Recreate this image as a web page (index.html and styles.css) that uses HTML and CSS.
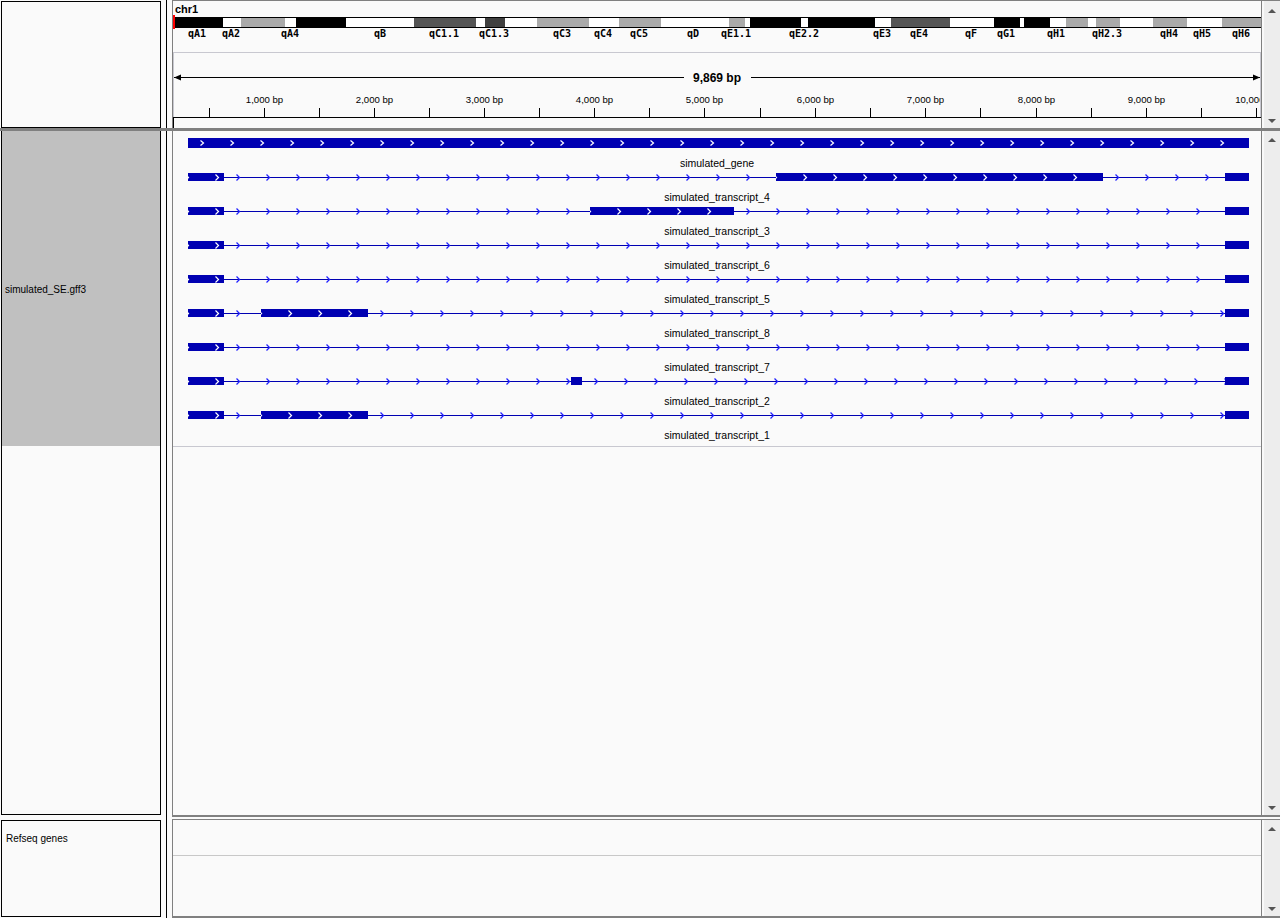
FILE: index.html
```html
<!DOCTYPE html>
<html>
<head>
<meta charset="utf-8">
<title>IGV</title>
<link rel="stylesheet" href="styles.css">
</head>
<body>
<div class="app">

  <section class="panel panel-header">
    <div class="name-col"><div class="name-box"></div></div>
    <div class="attr-col"></div>
    <div class="pane pane-header">
      <div class="pane-content">
        <div class="chrom-name">chr1</div>
        <div class="ideo">
          <div class="ideo-marker"></div>
          <div class="ideo-bands">
            <span class="band b-black" style="width:48px"></span>
            <span class="band b-white" style="width:18px"></span>
            <span class="band b-gray" style="width:44px"></span>
            <span class="band b-white" style="width:11px"></span>
            <span class="band b-black" style="width:50px"></span>
            <span class="band b-white" style="width:68px"></span>
            <span class="band b-dark" style="width:62px"></span>
            <span class="band b-white" style="width:9px"></span>
            <span class="band b-darker" style="width:20px"></span>
            <span class="band b-white" style="width:32px"></span>
            <span class="band b-gray" style="width:52px"></span>
            <span class="band b-white" style="width:30px"></span>
            <span class="band b-gray" style="width:42px"></span>
            <span class="band b-white" style="width:68px"></span>
            <span class="band b-gray" style="width:16px"></span>
            <span class="band b-white" style="width:5px"></span>
            <span class="band b-black" style="width:51px"></span>
            <span class="band b-white" style="width:7px"></span>
            <span class="band b-black" style="width:67px"></span>
            <span class="band b-white" style="width:16px"></span>
            <span class="band b-dark" style="width:59px"></span>
            <span class="band b-white" style="width:44px"></span>
            <span class="band b-black" style="width:26px"></span>
            <span class="band b-white" style="width:4px"></span>
            <span class="band b-black" style="width:26px"></span>
            <span class="band b-white" style="width:16px"></span>
            <span class="band b-gray" style="width:22px"></span>
            <span class="band b-white" style="width:8px"></span>
            <span class="band b-gray" style="width:24px"></span>
            <span class="band b-white" style="width:33px"></span>
            <span class="band b-gray" style="width:34px"></span>
            <span class="band b-white" style="width:35px"></span>
            <span class="band b-gray band-last"></span>
          </div>
          <span class="ideo-label" style="left:24px">qA1</span>
          <span class="ideo-label" style="left:58px">qA2</span>
          <span class="ideo-label" style="left:117px">qA4</span>
          <span class="ideo-label" style="left:207px">qB</span>
          <span class="ideo-label" style="left:271px">qC1.1</span>
          <span class="ideo-label" style="left:321px">qC1.3</span>
          <span class="ideo-label" style="left:389px">qC3</span>
          <span class="ideo-label" style="left:430px">qC4</span>
          <span class="ideo-label" style="left:466px">qC5</span>
          <span class="ideo-label" style="left:520px">qD</span>
          <span class="ideo-label" style="left:563px">qE1.1</span>
          <span class="ideo-label" style="left:631px">qE2.2</span>
          <span class="ideo-label" style="left:709px">qE3</span>
          <span class="ideo-label" style="left:746px">qE4</span>
          <span class="ideo-label" style="left:798px">qF</span>
          <span class="ideo-label" style="left:833px">qG1</span>
          <span class="ideo-label" style="left:883px">qH1</span>
          <span class="ideo-label" style="left:934px">qH2.3</span>
          <span class="ideo-label" style="left:996px">qH4</span>
          <span class="ideo-label" style="left:1029px">qH5</span>
          <span class="ideo-label" style="left:1068px">qH6</span>
        </div>
        <div class="ruler">
          <svg class="ruler-svg" width="1086" height="64" viewBox="0 0 1086 64">
            <rect class="rl" x="0" y="24" width="510" height="1"/>
            <rect class="rl" x="577" y="24" width="509" height="1"/>
            <polygon class="rl" points="0,24.5 7,21.5 7,27.5"/>
            <polygon class="rl" points="1086,24.5 1079,21.5 1079,27.5"/>
            <text class="span-label" x="543" y="29" text-anchor="middle">9,869 bp</text>
            <rect class="rl" x="35" y="55" width="1" height="9"/>
            <rect class="rl" x="90" y="55" width="1" height="9"/>
            <rect class="rl" x="145" y="55" width="1" height="9"/>
            <rect class="rl" x="200" y="55" width="1" height="9"/>
            <rect class="rl" x="255" y="55" width="1" height="9"/>
            <rect class="rl" x="310" y="55" width="1" height="9"/>
            <rect class="rl" x="365" y="55" width="1" height="9"/>
            <rect class="rl" x="420" y="55" width="1" height="9"/>
            <rect class="rl" x="475" y="55" width="1" height="9"/>
            <rect class="rl" x="530" y="55" width="1" height="9"/>
            <rect class="rl" x="586" y="55" width="1" height="9"/>
            <rect class="rl" x="641" y="55" width="1" height="9"/>
            <rect class="rl" x="696" y="55" width="1" height="9"/>
            <rect class="rl" x="751" y="55" width="1" height="9"/>
            <rect class="rl" x="806" y="55" width="1" height="9"/>
            <rect class="rl" x="862" y="55" width="1" height="9"/>
            <rect class="rl" x="917" y="55" width="1" height="9"/>
            <rect class="rl" x="972" y="55" width="1" height="9"/>
            <rect class="rl" x="1027" y="55" width="1" height="9"/>
            <rect class="rl" x="1082" y="55" width="1" height="9"/>
            <text class="tick-label" x="90.5" y="50" text-anchor="middle">1,000 bp</text>
            <text class="tick-label" x="200.5" y="50" text-anchor="middle">2,000 bp</text>
            <text class="tick-label" x="310.5" y="50" text-anchor="middle">3,000 bp</text>
            <text class="tick-label" x="420.5" y="50" text-anchor="middle">4,000 bp</text>
            <text class="tick-label" x="530.5" y="50" text-anchor="middle">5,000 bp</text>
            <text class="tick-label" x="641.5" y="50" text-anchor="middle">6,000 bp</text>
            <text class="tick-label" x="751.5" y="50" text-anchor="middle">7,000 bp</text>
            <text class="tick-label" x="862.5" y="50" text-anchor="middle">8,000 bp</text>
            <text class="tick-label" x="972.5" y="50" text-anchor="middle">9,000 bp</text>
            <text class="tick-label" x="1082.5" y="50" text-anchor="middle">10,000 bp</text>
          </svg>
        </div>
        <div class="roi"></div>
      </div>
      <div class="vscroll vscroll-header"><span class="arr-up"></span><span class="arr-down"></span></div>
    </div>
  </section>

  <div class="splitter"></div>

  <section class="panel panel-main">
    <div class="name-col">
      <div class="name-box name-box-main">
        <div class="track-name">simulated_SE.gff3</div>
      </div>
    </div>
    <div class="attr-col"></div>
    <div class="pane pane-main">
      <div class="pane-content">
        <div class="track">
          <div class="feat-row">
            <svg class="feat" width="1088" height="26" viewBox="0 0 1088 26">
              <defs>
                <pattern id="cg" patternUnits="userSpaceOnUse" x="0" y="0" width="30" height="26"><polyline class="chev-w" points="12.5,9.5 15.5,12 12.5,14.5"/></pattern>
                <pattern id="ce" patternUnits="userSpaceOnUse" x="15" y="0" width="30" height="26"><polyline class="chev-w" points="12.5,9.5 15.5,12.5 12.5,15.5"/></pattern>
                <pattern id="ci" patternUnits="userSpaceOnUse" x="0" y="0" width="30" height="26"><polyline class="chev-b" points="12.5,9.5 15.5,12.5 12.5,15.5"/></pattern>
              </defs>
              <rect class="exon" x="15" y="7" width="1061" height="10"/>
              <g transform="translate(15 0)"><rect width="1061" height="26" fill="url(#cg)"/></g>
            </svg>
            <div class="feat-label">simulated_gene</div>
          </div>

          <div class="feat-row">
            <svg class="feat" width="1088" height="26" viewBox="0 0 1088 26">
              <rect class="iline" x="51" y="12" width="1001" height="1"/>
              <g transform="translate(51 0)"><rect width="552" height="26" fill="url(#ci)"/></g>
              <g transform="translate(930 0)"><rect width="122" height="26" fill="url(#ci)"/></g>
              <g transform="translate(15 0)"><rect class="exon" y="8" width="36" height="8"/><rect width="36" height="26" fill="url(#ce)"/></g>
              <g transform="translate(603 0)"><rect class="exon" y="8" width="327" height="8"/><rect width="327" height="26" fill="url(#ce)"/></g>
              <g transform="translate(1052 0)"><rect class="exon" y="8" width="24" height="8"/></g>
            </svg>
            <div class="feat-label">simulated_transcript_4</div>
          </div>

          <div class="feat-row">
            <svg class="feat" width="1088" height="26" viewBox="0 0 1088 26">
              <rect class="iline" x="51" y="12" width="1001" height="1"/>
              <g transform="translate(51 0)"><rect width="366" height="26" fill="url(#ci)"/></g>
              <g transform="translate(561 0)"><rect width="491" height="26" fill="url(#ci)"/></g>
              <g transform="translate(15 0)"><rect class="exon" y="8" width="36" height="8"/><rect width="36" height="26" fill="url(#ce)"/></g>
              <g transform="translate(417 0)"><rect class="exon" y="8" width="144" height="8"/><rect width="144" height="26" fill="url(#ce)"/></g>
              <g transform="translate(1052 0)"><rect class="exon" y="8" width="24" height="8"/></g>
            </svg>
            <div class="feat-label">simulated_transcript_3</div>
          </div>

          <div class="feat-row">
            <svg class="feat" width="1088" height="26" viewBox="0 0 1088 26">
              <rect class="iline" x="51" y="12" width="1001" height="1"/>
              <g transform="translate(51 0)"><rect width="1001" height="26" fill="url(#ci)"/></g>
              <g transform="translate(15 0)"><rect class="exon" y="8" width="36" height="8"/><rect width="36" height="26" fill="url(#ce)"/></g>
              <g transform="translate(1052 0)"><rect class="exon" y="8" width="24" height="8"/></g>
            </svg>
            <div class="feat-label">simulated_transcript_6</div>
          </div>

          <div class="feat-row">
            <svg class="feat" width="1088" height="26" viewBox="0 0 1088 26">
              <rect class="iline" x="51" y="12" width="1001" height="1"/>
              <g transform="translate(51 0)"><rect width="1001" height="26" fill="url(#ci)"/></g>
              <g transform="translate(15 0)"><rect class="exon" y="8" width="36" height="8"/><rect width="36" height="26" fill="url(#ce)"/></g>
              <g transform="translate(1052 0)"><rect class="exon" y="8" width="24" height="8"/></g>
            </svg>
            <div class="feat-label">simulated_transcript_5</div>
          </div>

          <div class="feat-row">
            <svg class="feat" width="1088" height="26" viewBox="0 0 1088 26">
              <rect class="iline" x="51" y="12" width="1001" height="1"/>
              <g transform="translate(51 0)"><rect width="37" height="26" fill="url(#ci)"/></g>
              <g transform="translate(195 0)"><rect width="857" height="26" fill="url(#ci)"/></g>
              <g transform="translate(15 0)"><rect class="exon" y="8" width="36" height="8"/><rect width="36" height="26" fill="url(#ce)"/></g>
              <g transform="translate(88 0)"><rect class="exon" y="8" width="107" height="8"/><rect width="107" height="26" fill="url(#ce)"/></g>
              <g transform="translate(1052 0)"><rect class="exon" y="8" width="24" height="8"/></g>
            </svg>
            <div class="feat-label">simulated_transcript_8</div>
          </div>

          <div class="feat-row">
            <svg class="feat" width="1088" height="26" viewBox="0 0 1088 26">
              <rect class="iline" x="51" y="12" width="1001" height="1"/>
              <g transform="translate(51 0)"><rect width="1001" height="26" fill="url(#ci)"/></g>
              <g transform="translate(15 0)"><rect class="exon" y="8" width="36" height="8"/><rect width="36" height="26" fill="url(#ce)"/></g>
              <g transform="translate(1052 0)"><rect class="exon" y="8" width="24" height="8"/></g>
            </svg>
            <div class="feat-label">simulated_transcript_7</div>
          </div>

          <div class="feat-row">
            <svg class="feat" width="1088" height="26" viewBox="0 0 1088 26">
              <rect class="iline" x="51" y="12" width="1001" height="1"/>
              <g transform="translate(51 0)"><rect width="347" height="26" fill="url(#ci)"/></g>
              <g transform="translate(409 0)"><rect width="643" height="26" fill="url(#ci)"/></g>
              <g transform="translate(15 0)"><rect class="exon" y="8" width="36" height="8"/><rect width="36" height="26" fill="url(#ce)"/></g>
              <g transform="translate(398 0)"><rect class="exon" y="8" width="11" height="8"/></g>
              <g transform="translate(1052 0)"><rect class="exon" y="8" width="24" height="8"/></g>
            </svg>
            <div class="feat-label">simulated_transcript_2</div>
          </div>

          <div class="feat-row">
            <svg class="feat" width="1088" height="26" viewBox="0 0 1088 26">
              <rect class="iline" x="51" y="12" width="1001" height="1"/>
              <g transform="translate(51 0)"><rect width="37" height="26" fill="url(#ci)"/></g>
              <g transform="translate(195 0)"><rect width="857" height="26" fill="url(#ci)"/></g>
              <g transform="translate(15 0)"><rect class="exon" y="8" width="36" height="8"/><rect width="36" height="26" fill="url(#ce)"/></g>
              <g transform="translate(88 0)"><rect class="exon" y="8" width="107" height="8"/><rect width="107" height="26" fill="url(#ce)"/></g>
              <g transform="translate(1052 0)"><rect class="exon" y="8" width="24" height="8"/></g>
            </svg>
            <div class="feat-label">simulated_transcript_1</div>
          </div>
        </div>
      </div>
      <div class="vscroll"><span class="arr-up"></span><span class="arr-down"></span></div>
    </div>
  </section>

  <section class="panel panel-bottom">
    <div class="name-col">
      <div class="name-box name-box-bottom">
        <div class="bottom-name">Refseq genes</div>
      </div>
    </div>
    <div class="attr-col"></div>
    <div class="pane pane-bottom">
      <div class="pane-content">
        <div class="empty-track"></div>
      </div>
      <div class="vscroll"><span class="arr-up"></span><span class="arr-down"></span></div>
    </div>
  </section>

</div>
</body>
</html>
```

FILE: styles.css
```css
* {
  box-sizing: border-box;
}

html,
body {
  margin: 0;
  padding: 0;
}

body {
  width: 1280px;
  height: 918px;
  overflow: hidden;
  background: #fafafa;
  color: #000;
  font-family: "Liberation Sans", Arial, sans-serif;
}

.app {
  display: flex;
  flex-direction: column;
  width: 1280px;
  height: 918px;
}

.panel {
  display: flex;
  flex: none;
}

.panel-header {
  height: 128px;
}

.panel-main {
  height: 688px;
}

.panel-bottom {
  height: 99px;
}

.splitter {
  flex: none;
  height: 3px;
  background: #808080;
}

/* name column */
.name-col {
  flex: none;
  width: 161px;
  padding-left: 1px;
}

.name-box {
  width: 160px;
  border: 1px solid #000;
}

.panel-header .name-box {
  margin-top: 1px;
  height: 127px;
}

.name-box-main {
  height: 684px;
  border-top: none;
}

.name-box-bottom {
  margin-top: 1px;
  height: 97px;
}

.track-name {
  height: 315px;
  background: #c0c0c0;
  display: flex;
  align-items: center;
  padding: 3px 0 0 3px;
  font-size: 10px;
  line-height: 12px;
}

.bottom-name {
  padding: 12px 0 0 4px;
  font-size: 10px;
  line-height: 12px;
}

/* attribute column */
.attr-col {
  flex: none;
  width: 6px;
  border-right: 1px solid #000;
}

/* data panes */
.pane {
  flex: none;
  display: flex;
  width: 1108px;
  margin-left: 5px;
  border-left: 1px solid #808080;
}

.pane-header {
  border-top: 1px solid #808080;
}

.pane-main {
  height: 686px;
  border-bottom: 2px solid #808080;
}

.pane-bottom {
  height: 99px;
  border-top: 1px solid #808080;
  border-bottom: 2px solid #808080;
}

.pane-content {
  flex: none;
  width: 1089px;
  border-right: 1px solid #808080;
  overflow: hidden;
}

.vscroll {
  flex: none;
  width: 18px;
  display: flex;
  flex-direction: column;
  justify-content: space-between;
  align-items: center;
  padding: 7px 0 5px 1px;
  background: #ededed;
  box-shadow: inset 2px 0 0 #f9f9f9;
}

.vscroll-header {
  padding-top: 8px;
}

.arr-up,
.arr-down {
  display: block;
  width: 0;
  height: 0;
  border-left: 4px solid transparent;
  border-right: 4px solid transparent;
}

.arr-up {
  border-bottom: 4px solid #555;
}

.arr-down {
  border-top: 4px solid #555;
}

/* header: chromosome + ideogram */
.chrom-name {
  height: 14px;
  padding-left: 2px;
  font-size: 11px;
  font-weight: bold;
  line-height: 16px;
}

.ideo {
  position: relative;
  display: flex;
  align-items: flex-start;
  height: 37px;
}

.ideo-marker {
  flex: none;
  width: 2px;
  height: 14px;
  background: #ff0000;
}

.ideo-bands {
  flex: 1;
  display: flex;
  height: 11px;
  margin-top: 2px;
  border-top: 1px solid #000;
  border-bottom: 1px solid #000;
}

.band {
  flex: none;
  height: 100%;
}

.band-last {
  flex: 1;
}

.b-black {
  background: #000;
}

.b-white {
  background: #fff;
}

.b-gray {
  background: #aaaaaa;
}

.b-dark {
  background: #555555;
}

.b-darker {
  background: #404040;
}

.ideo-label {
  position: absolute;
  top: 14px;
  transform: translateX(-50%);
  font-family: "DejaVu Sans Mono", monospace;
  font-size: 10px;
  font-weight: bold;
  line-height: 10px;
  white-space: nowrap;
}

/* ruler */
.ruler {
  height: 65px;
  border: 1px solid #c8c8d0;
  border-bottom: none;
}

.ruler-svg {
  display: block;
}

.rl {
  fill: #000;
}

.span-label {
  font-family: "Liberation Sans", Arial, sans-serif;
  font-size: 12px;
  font-weight: bold;
  fill: #000;
}

.tick-label {
  font-family: "Liberation Sans", Arial, sans-serif;
  font-size: 9.6px;
  fill: #000;
}

.roi {
  height: 11px;
  border-top: 1px solid #000;
  border-left: 1px solid #000;
}

/* feature track */
.track {
  height: 316px;
  border-bottom: 1px solid #c8c8d0;
}

.feat-row {
  height: 34px;
}

.feat {
  display: block;
}

.exon {
  fill: #0000b2;
}

.iline {
  fill: #0000b2;
}

.chev-w {
  fill: none;
  stroke: #ffffff;
  stroke-width: 1.2;
}

.chev-b {
  fill: none;
  stroke: #2020ff;
  stroke-width: 1.3;
}

.feat-label {
  width: 1088px;
  text-align: center;
  font-size: 10.5px;
  line-height: 12px;
  white-space: nowrap;
}

.empty-track {
  height: 36px;
  border-bottom: 1px solid #c8c8c8;
}
```
